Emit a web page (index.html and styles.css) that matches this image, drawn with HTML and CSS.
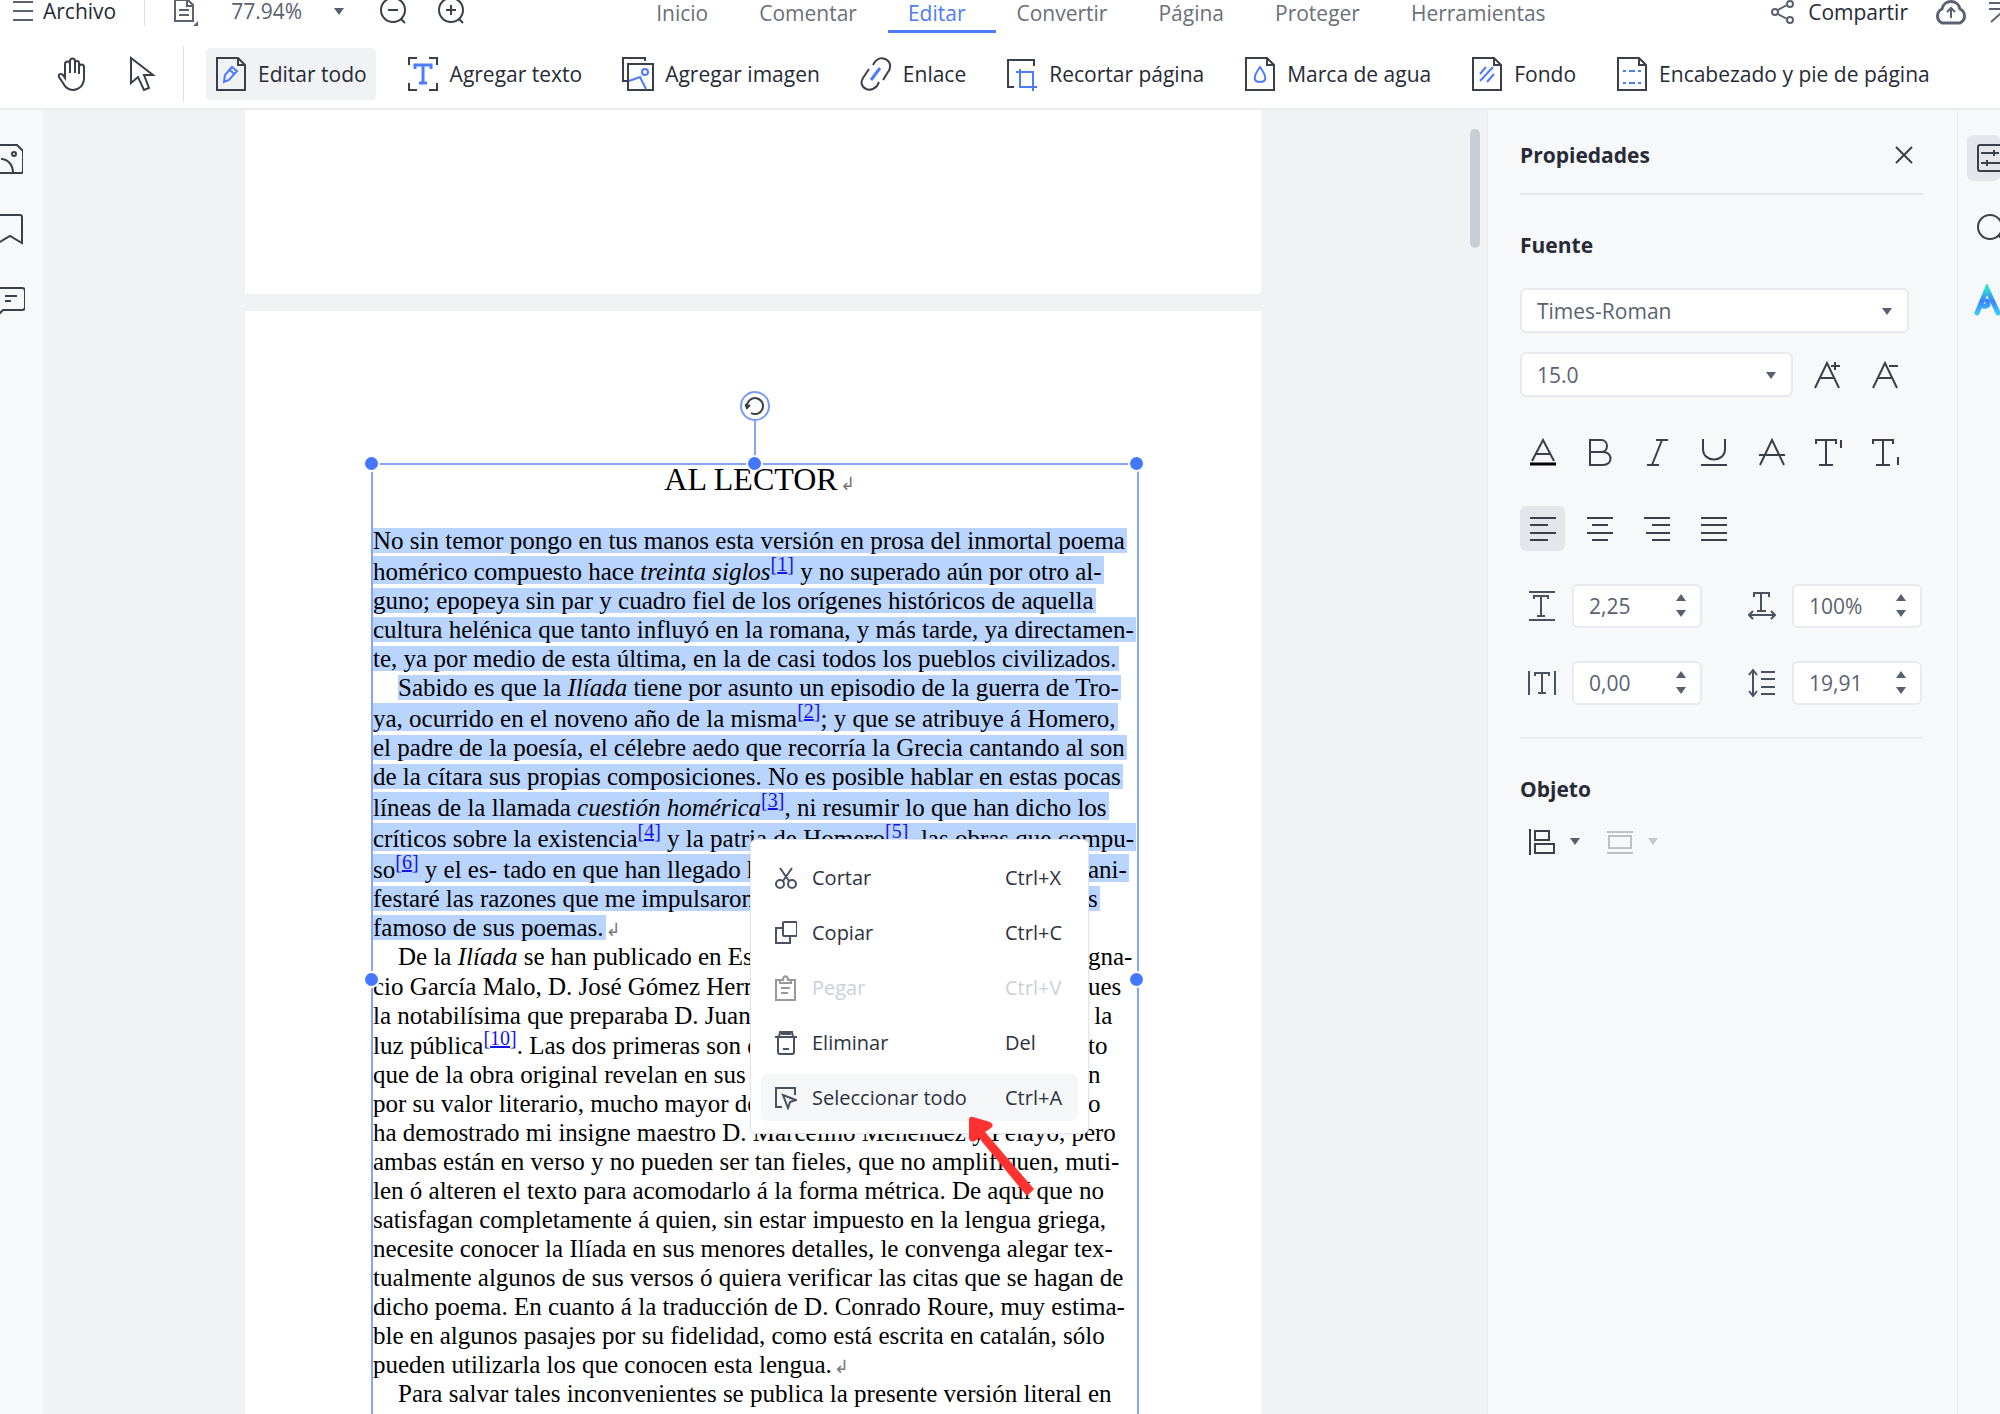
FILE: index.html
```html
<!DOCTYPE html>
<html lang="es">
<head>
<meta charset="utf-8">
<title>Editor PDF</title>
<link rel="stylesheet" href="styles.css">
</head>
<body>
<div id="app">
    <div id="topBar">
        <button class="archivo"><svg width="20" height="22" viewBox="0 0 20 22"><path d="M0 2h20M0 11h20M0 20h20"/></svg>Archivo</button>
        <span class="sep"></span>
        <button class="vista" aria-label="Vista de página"><svg width="26" height="30" viewBox="0 0 26 30"><path d="M2 4h13l5 5v16H2zM14 4v6h6M6 14h10M6 19h10"/><path class="fill" d="M25 25v5h-5z"/></svg></button>
        <button class="zoom">77.94%<i class="caret"></i></button>
        <button class="lupa" aria-label="Alejar"><svg width="28" height="28" viewBox="0 0 28 28"><circle cx="14" cy="13" r="12"/><path d="M9 13h10M22 22l4 4"/></svg></button>
        <button class="lupa" aria-label="Acercar"><svg width="28" height="28" viewBox="0 0 28 28"><circle cx="14" cy="13" r="12"/><path d="M9 13h10M14 8v10M22 22l4 4"/></svg></button>
        <div class="tabs">
            <a href="#">Inicio</a>
            <a href="#">Comentar</a>
            <a href="#" class="active">Editar</a>
            <a href="#">Convertir</a>
            <a href="#">Página</a>
            <a href="#">Proteger</a>
            <a href="#">Herramientas</a>
        </div>
        <div class="acciones">
            <button class="compartir"><svg width="24" height="26" viewBox="0 0 24 26"><circle cx="4" cy="13" r="3"/><circle cx="19" cy="5" r="3"/><circle cx="19" cy="21" r="3"/><path d="M7 11l9-5M7 15l9 5"/></svg>Compartir</button>
            <button aria-label="Nube"><svg width="30" height="28" viewBox="0 0 30 28"><path class="thick" d="M6 25C0 22 0 14 6 11C8 1 22 1 24 11c6 3 6 11 0 14z"/><path d="M15 20v-9M11 14l4-4 4 4"/></svg></button>
            <button class="plegar" aria-label="Contraer"><svg width="24" height="26" viewBox="0 0 24 26"><path d="M1 4h22M1 10h22M3 23l9-8 9 8"/></svg></button>
        </div>
    </div>
    <!--/topBar-->
    <div id="tools">
        <button class="solo" aria-label="Mano"><svg width="32" height="36" viewBox="0 0 32 36"><path d="M9 20V8a2 2 0 0 1 5 0v9V5a2 2 0 0 1 5 0v12V7a2 2 0 0 1 4 0v11-7a2 2 0 0 1 5 0v11c0 7-5 12-11 12-5 0-8-3-10-7L3 21c-1-3 2-4 4-2l2 3z"/></svg></button>
        <button class="solo flecha" aria-label="Seleccionar"><svg width="32" height="36" viewBox="0 0 32 36"><path d="M5 2v25l7-6 6 13 5-2-5-13h9z"/></svg></button>
        <span class="sep"></span>
        <button class="active"><svg width="32" height="36" viewBox="0 0 32 36"><path d="M2 2h21l7 7v25H2zM23 2v7h7"/><path class="b" d="M9 26l1-7 7-8 5 4-8 9zM15 14l4 4"/></svg>Editar todo</button>
        <button><svg width="32" height="36" viewBox="0 0 32 36"><path d="M2 9V2h8M22 2h8v7M30 27v7h-8M10 34H2v-7"/><path class="b thick" d="M8 13V9h16v4M16 9v18M12 27h8"/></svg>Agregar texto</button>
        <button><svg width="32" height="36" viewBox="0 0 32 36"><path d="M23 5V2H1v23h4"/><path d="M6 8h25v26H6z"/><path class="b" d="M7 25l11-4 6 12"/><circle class="b" cx="23" cy="16" r="3"/></svg>Agregar imagen</button>
        <button><svg width="32" height="36" viewBox="0 0 32 36"><path d="M13 9c4-8 10-8 14-5s4 8 1 12l-5 8M9 13l-6 9c-3 5-1 9 3 11 5 2 8 0 11-3l2-4"/><path class="b thick" d="M20 12l-9 12"/></svg>Enlace</button>
        <button><svg width="32" height="36" viewBox="0 0 32 36"><path d="M28 10V4H2v27h6"/><path class="b" d="M14 13v18h17M10 16h17v19"/></svg>Recortar página</button>
        <button><svg width="32" height="36" viewBox="0 0 32 36"><path d="M2 2h21l7 7v25H2zM23 2v7h7"/><path class="b" d="M16 11c-8 11-6 15 0 15s8-4 0-15z"/></svg>Marca de agua</button>
        <button><svg width="32" height="36" viewBox="0 0 32 36"><path d="M2 2h21l7 7v25H2zM23 2v7h7"/><path class="b" d="M9 18l6-7M9 25l13-14M16 26l7-8"/></svg>Fondo</button>
        <button><svg width="32" height="36" viewBox="0 0 32 36"><path d="M2 2h21l7 7v25H2zM23 2v7h7"/><path class="b" d="M7 15h3M13 15h6M22 15h3M7 27h3M13 27h6M22 27h3"/></svg>Encabezado y pie de página</button>
    </div>
    <!--/tools-->
    <div id="main">
        <div class="rail left">
            <button aria-label="Miniaturas"><svg width="32" height="32" viewBox="0 0 32 32"><path d="M1 2h25l6 6v20q0 2-2 2H1zM10 16c7 0 12 6 12 14"/><circle cx="23" cy="11" r="2"/></svg></button>
            <button aria-label="Marcadores"><svg width="32" height="32" viewBox="0 0 32 32"><path d="M6 2h23q2 0 2 2v26l-12-7-12 7z"/></svg></button>
            <button aria-label="Comentarios"><svg width="34" height="32" viewBox="0 0 34 32"><path d="M3 5h28q3 0 3 3v16q0 3-3 3H12l-4 4v-4H3zM14 13h12M14 18h6"/></svg></button>
        </div>
        <div id="canvas">
            <div class="pages">
                <div class="page first"></div>
                <div class="page">
                    <div class="textBox">
                        <span class="stem"></span>
                        <span class="rotate"><svg width="20" height="20" viewBox="0 0 20 20"><path d="M6 17A8 8 0 1 0 2 10M0 8l2 4 3-3"/></svg></span>
                        <i class="dot tl"></i><i class="dot tc"></i><i class="dot tr"></i><i class="dot ml"></i><i class="dot mr"></i>
                        <h1>AL LECTOR<span class="ret">↲</span></h1>
                        <p class="sel">
                            <span class="line"><mark>No sin temor pongo en tus manos esta versión en prosa del inmortal poema</mark></span>
                            <span class="line note"><mark>homérico compuesto hace <em>treinta siglos</em><sup>[<a href="#">1</a>]</sup> y no superado aún por otro al-</mark></span>
                            <span class="line"><mark>guno; epopeya sin par y cuadro fiel de los orígenes históricos de aquella</mark></span>
                            <span class="line"><mark>cultura helénica que tanto influyó en la romana, y más tarde, ya directamen-</mark></span>
                            <span class="line"><mark>te, ya por medio de esta última, en la de casi todos los pueblos civilizados.</mark></span>
                        </p>
                        <p class="sel">
                            <span class="line indent"><mark>Sabido es que la <em>Ilíada</em> tiene por asunto un episodio de la guerra de Tro-</mark></span>
                            <span class="line note"><mark>ya, ocurrido en el noveno año de la misma<sup>[<a href="#">2</a>]</sup>; y que se atribuye á Homero,</mark></span>
                            <span class="line"><mark>el padre de la poesía, el célebre aedo que recorría la Grecia cantando al son</mark></span>
                            <span class="line"><mark>de la cítara sus propias composiciones. No es posible hablar en estas pocas</mark></span>
                            <span class="line note"><mark>líneas de la llamada <em>cuestión homérica</em><sup>[<a href="#">3</a>]</sup>, ni resumir lo que han dicho los</mark></span>
                            <span class="line note"><mark>críticos sobre la existencia<sup>[<a href="#">4</a>]</sup> y la patria de Homero<sup>[<a href="#">5</a>]</sup>, las obras que compu-</mark></span>
                            <span class="line note"><mark><span class="lead">so<sup>[<a href="#">6</a>]</sup> y el es- tado en que han llegado h</span><span>ani-</span></mark></span>
                            <span class="line"><mark><span class="lead">festaré las razones que me impulsaron</span><span>s</span></mark></span>
                            <span class="line"><mark>famoso de sus poemas.</mark><span class="ret">↲</span></span>
                        </p>
                        <p>
                            <span class="line indent"><span class="lead">De la <em>Ilíada</em> se han publicado en Es</span><span>gna-</span></span>
                            <span class="line note"><span class="lead">cio García Malo, D. José Gómez Herm</span><span>ues</span></span>
                            <span class="line"><span class="lead">la notabilísima que preparaba D. Juan</span><span>&nbsp;la</span></span>
                            <span class="line note"><span class="lead">luz pública<sup>[<a href="#">10</a>]</sup>. Las dos primeras son d</span><span>to</span></span>
                            <span class="line"><span class="lead">que de la obra original revelan en sus a</span><span>n</span></span>
                            <span class="line"><span class="lead">por su valor literario, mucho mayor de</span><span>o</span></span>
                            <span class="line">ha demostrado mi insigne maestro D. Marcelino Menéndez y Pelayo, pero</span>
                            <span class="line">ambas están en verso y no pueden ser tan fieles, que no amplifiquen, muti-</span>
                            <span class="line">len ó alteren el texto para acomodarlo á la forma métrica. De aquí que no</span>
                            <span class="line">satisfagan completamente á quien, sin estar impuesto en la lengua griega,</span>
                            <span class="line">necesite conocer la Ilíada en sus menores detalles, le convenga alegar tex-</span>
                            <span class="line">tualmente algunos de sus versos ó quiera verificar las citas que se hagan de</span>
                            <span class="line">dicho poema. En cuanto á la traducción de D. Conrado Roure, muy estima-</span>
                            <span class="line">ble en algunos pasajes por su fidelidad, como está escrita en catalán, sólo</span>
                            <span class="line">pueden utilizarla los que conocen esta lengua.<span class="ret">↲</span></span>
                        </p>
                        <p>
                            <span class="line indent">Para salvar tales inconvenientes se publica la presente versión literal en</span>
                            <span class="line">prosa castellana, en cuya lengua apenas se variable, se ha de los textos son</span>
                        </p>
                        <div class="menu">
                            <button><svg width="22" height="24" viewBox="0 0 22 24"><circle cx="5" cy="18" r="4"/><circle cx="17" cy="18" r="4"/><path d="M5 2l9 13M17 2L8 15"/></svg><span>Cortar</span><span class="key">Ctrl+X</span></button>
                            <button><svg width="22" height="24" viewBox="0 0 22 24"><rect x="8" y="1" width="14" height="14" rx="1"/><path d="M8 7H1v15h14v-7"/></svg><span>Copiar</span><span class="key">Ctrl+C</span></button>
                            <button disabled><svg width="22" height="26" viewBox="0 0 22 26"><path d="M6 5H1v20h19V5h-5M5 8V5h3c0-5 5-5 5 0h3v3zM6 13h9M6 18h7"/></svg><span>Pegar</span><span class="key">Ctrl+V</span></button>
                            <button><svg width="22" height="24" viewBox="0 0 22 24"><path d="M0 6h22M4 6l1-5h12l1 5M3 6v15q0 2 2 2h12q2 0 2-2V6M8 18h6M6 3h10"/></svg><span>Eliminar</span><span class="key">Del</span></button>
                            <button class="active"><svg width="22" height="24" viewBox="0 0 22 24"><path d="M20 9V2H1v19h6M8 9l13 5-6 2-2 6z"/></svg><span>Seleccionar todo</span><span class="key">Ctrl+A</span></button>
                        </div>
                        <svg class="pointer" width="70" height="82" viewBox="0 0 70 82"><path d="M2 5q0-4 4-3l17 5q5 3 1 6l-6 4 49 57-7 7-48-58-4 3q-5 2-6-3z"/></svg>
                    </div>
                </div>
            </div>
            <div class="scroll"><i></i></div>
        </div>
        <!--/canvas-->
        <div id="props">
            <div class="head"><h2>Propiedades</h2><button aria-label="Cerrar"><svg width="18" height="18" viewBox="0 0 18 18"><path d="M1 1l16 16M17 1L1 17"/></svg></button></div>
            <h2>Fuente</h2>
            <div class="fields">
                <label class="drop"><select aria-label="Fuente"><option>Times-Roman</option></select></label>
                <div class="size">
                    <label class="drop"><select aria-label="Tamaño"><option>15.0</option></select></label>
                    <button aria-label="Aumentar"><svg width="28" height="28" viewBox="0 0 28 28"><path d="M2 27L14 2l12 25M6 17h16M18 5h9M22 1v8"/></svg></button>
                    <button aria-label="Reducir"><svg width="28" height="28" viewBox="0 0 28 28"><path d="M2 27L14 2l12 25M6 17h16M18 5h9"/></svg></button>
                </div>
            </div>
            <div class="icons">
                <button aria-label="Color"><svg width="28" height="28" viewBox="0 0 28 28"><path d="M3 23L14 2l11 21M7 16h14"/><path class="black" d="M1 26h26"/></svg></button>
                <button aria-label="Negrita"><svg width="28" height="28" viewBox="0 0 28 28"><path d="M4 2h11c8 0 8 12 0 12H4zM4 14h13c10 0 10 13 0 13H4z"/></svg></button>
                <button aria-label="Cursiva"><svg width="28" height="28" viewBox="0 0 28 28"><path d="M13 2h12M19 2L9 27M4 27h12"/></svg></button>
                <button aria-label="Subrayado"><svg width="28" height="28" viewBox="0 0 28 28"><path d="M3 1v10c0 14 22 14 22 0V1M1 27h26"/></svg></button>
                <button aria-label="Tachado"><svg width="28" height="28" viewBox="0 0 28 28"><path d="M2 27L14 2l12 25M1 17h26"/></svg></button>
                <button aria-label="Superíndice"><svg width="28" height="28" viewBox="0 0 28 28"><path d="M1 6V2h20v4M11 2v25M4 27h14M26 2v8"/></svg></button>
                <button aria-label="Subíndice"><svg width="28" height="28" viewBox="0 0 28 28"><path d="M1 6V2h20v4M11 2v25M4 27h14M26 19v8"/></svg></button>
            </div>
            <div class="icons">
                <button class="active" aria-label="Izquierda"><svg width="28" height="28" viewBox="0 0 28 28"><path d="M1 3h26M1 10h18M1 18h26M1 25h18"/></svg></button>
                <button aria-label="Centro"><svg width="28" height="28" viewBox="0 0 28 28"><path d="M1 3h26M6 10h16M1 18h26M6 25h16"/></svg></button>
                <button aria-label="Derecha"><svg width="28" height="28" viewBox="0 0 28 28"><path d="M1 3h26M9 10h18M3 18h24M9 25h18"/></svg></button>
                <button aria-label="Justificar"><svg width="28" height="28" viewBox="0 0 28 28"><path d="M1 3h26M1 10h26M1 18h26M1 25h26"/></svg></button>
            </div>
            <div class="spins">
                <svg width="28" height="32" viewBox="0 0 28 32"><path d="M1 2h26M1 30h26M6 9V6h14v3M13 6v20M9 26h8"/></svg>
                <div class="spin"><input type="text" value="2,25" aria-label="Altura"><button aria-label="Más"></button><button aria-label="Menos"></button></div>
                <svg width="28" height="32" viewBox="0 0 28 32"><path d="M6 7V3h15v4M13 3v18M9 21h9M2 25h24M5 21l-4 4 4 4M23 21l4 4-4 4"/></svg>
                <div class="spin"><input type="text" value="100%" aria-label="Escala"><button aria-label="Más"></button><button aria-label="Menos"></button></div>
                <svg width="28" height="32" viewBox="0 0 28 32"><path d="M1 4v24M27 4v24M7 9V6h14v3M14 6v20M10 26h8"/></svg>
                <div class="spin"><input type="text" value="0,00" aria-label="Espaciado"><button aria-label="Más"></button><button aria-label="Menos"></button></div>
                <svg width="28" height="32" viewBox="0 0 28 32"><path d="M5 4v24M1 8l4-5 4 5M1 24l4 5 4-5M13 5h14M13 12h14M13 20h14M13 27h14"/></svg>
                <div class="spin"><input type="text" value="19,91" aria-label="Interlineado"><button aria-label="Más"></button><button aria-label="Menos"></button></div>
            </div>
            <h2>Objeto</h2>
            <div class="objeto">
                <button aria-label="Alinear"><svg width="28" height="28" viewBox="0 0 28 28"><path d="M2 1v26M7 3h14v9H7zM7 16h19v9H7z"/></svg><i class="caret"></i></button>
                <button disabled aria-label="Distribuir"><svg width="28" height="28" viewBox="0 0 28 28"><path d="M1 4h26M1 25h26M3 8h22v12H3z"/></svg><i class="caret"></i></button>
            </div>
        </div>
        <!--/props-->
        <div class="rail right">
            <button class="active" aria-label="Propiedades"><svg width="32" height="32" viewBox="0 0 32 32"><rect x="2" y="3" width="28" height="26" rx="2"/><path d="M5 11h18M18 8v6M5 21h22M11 18v6"/></svg></button>
            <button aria-label="Buscar"><svg width="32" height="32" viewBox="0 0 32 32"><circle cx="14" cy="15" r="12"/><path d="M22 23l7 7"/></svg></button>
            <button class="ai" aria-label="IA"><svg width="32" height="32" viewBox="0 0 32 32"><defs><linearGradient id="g" x1="0" y1="1" x2="0" y2="0"><stop offset="0" stop-color="#38c8ff"/><stop offset=".5" stop-color="#3b82ff"/><stop offset="1" stop-color="#2ce0cf"/></linearGradient></defs><path d="M3 29L13 5l11 24M9 22c5 1 6-1 4-5" stroke="url(#g)"/></svg></button>
        </div>
    </div>
</div>
</body>
</html>
```
FILE: styles.css
```css
*{box-sizing:border-box;}
body,h1,h2,p{margin:0;padding:0;}
body{height:100vh;overflow:hidden;background:#FFF;color:#262B36;font:21px/30px "Open Sans","Noto Sans",sans-serif;}
button{display:flex;align-items:center;flex:none;margin:0;padding:0;border:0;background:none;color:inherit;font:inherit;white-space:nowrap;}
a{color:inherit;text-decoration:none;}
svg{display:block;flex:none;fill:none;stroke:#3A3F4A;stroke-width:2;}
svg .fill{fill:#5A6270;stroke:none;}
svg .b{stroke:#4D7CFE;}
svg .thick{stroke-width:3;}
svg .black{stroke:#000;stroke-width:3;}
.caret{flex:none;border:5px solid transparent;border-top:7px solid #56606F;border-bottom:0;}
.sep{flex:none;width:1px;background:#DDDFE3;}
#app{display:flex;flex-direction:column;height:100%;overflow:hidden;}

/* top bar */
#topBar{display:flex;align-items:center;flex:none;height:44px;margin-top:-11px;padding-left:13px;line-height:20px;}
#topBar svg{stroke:#5A6270;}
#topBar .archivo{gap:10px;}
#topBar .sep{height:30px;margin:0 28px;}
#topBar .zoom{gap:32px;margin:0 35px 0 32px;color:#5A6270;}
#topBar .lupa{margin-right:30px;}
#topBar .lupa svg{stroke:#3A3F4A;}
.tabs{display:flex;align-self:stretch;margin:0 auto 0 141px;color:#6B6F78;}
.tabs a{padding:14px 31px 0 20px;border-bottom:3px solid transparent;}
.tabs .active{color:#4D7CFE;border-color:#4D7CFE;}
.acciones{display:flex;align-items:center;flex:none;gap:28px;padding-top:2px;}
.compartir{gap:13px;}
#topBar .plegar{width:12px;overflow:hidden;margin-left:-6px;}

/* toolbar */
#tools{display:flex;align-items:center;flex:none;height:77px;padding:7px 0 0 47px;border-bottom:2px solid #EAECEE;gap:22px;}
#tools button{height:52px;gap:11px;padding:0 9px;border-radius:5px;}
#tools .flecha{margin:0 -4px 0 -2px;}
#tools .sep{height:56px;margin:0 0 0 -2px;}
#tools .active{background:#F0F2F4;}

/* layout */
#main{display:flex;flex:1;min-height:0;}
.rail{display:flex;flex-direction:column;flex:none;width:43px;padding-top:25px;background:#F7F8FA;overflow:hidden;}
.rail button{height:46px;margin-bottom:24px;}
.left{padding-top:26px;}
.left button{margin-left:-9px;}
.right{border-left:1px solid #ECEEF1;}
.right button{margin-left:9px;padding-left:9px;border-radius:6px;}
.right .active{background:#E4E6EC;}
.right .ai{padding:3px 0 0 7px;}
.ai svg{stroke-width:5;stroke-linecap:round;}
#canvas{display:flex;flex:1;min-width:0;background:#F0F2F4;}
.pages{display:flex;flex-direction:column;flex:1;min-width:0;gap:17px;padding:0 202px;}
.page{flex:1;min-height:0;padding:152px 122px 0 126px;background:#FFF;}
.page.first{flex:none;height:184px;padding:0;}
.scroll{flex:none;width:24px;padding:19px 0 0 7px;}
.scroll i{display:block;width:10px;height:119px;border-radius:5px;background:#C9CDD6;}

/* document text */
.textBox{position:relative;height:1034px;border:2px solid #86A5FA;color:#000;font:25px/25px "Liberation Serif",serif;white-space:nowrap;}
.textBox h1{margin-bottom:34px;padding-right:4px;font-size:32px;line-height:29px;font-weight:normal;text-align:center;}
.line{display:block;height:25px;margin-bottom:4px;}
.line mark{display:inline-block;height:25px;padding-right:2px;vertical-align:top;background:#B8D4FF;color:#000;}
.note{height:28px;margin:-2px 0 4px;padding-top:3px;}
.sel .note{margin-top:-1px;}
.note mark{height:28px;margin-top:-3px;padding-top:3px;}
.indent{padding-left:25px;}
/* lines that run under the menu */
.lead{display:inline-block;width:377px;margin-right:338px;overflow-x:clip;vertical-align:top;}
.indent .lead{width:352px;}
.line sup{color:#1414E6;font-size:20px;line-height:0;vertical-align:9px;}
.line sup a{text-decoration:underline;}
.ret{display:inline-block;width:18px;margin-right:-14px;padding-left:2px;color:#777;font:18px/14px "DejaVu Sans",sans-serif;}
mark+.ret{padding-left:0;}
.dot{position:absolute;width:17px;height:17px;margin:-9px;border:2px solid #FFF;border-radius:50%;background:#4477FF;}
.tl{left:-1px;top:-1px;}
.tc{left:50%;top:-1px;}
.tr{left:100%;top:-1px;}
.ml{left:-1px;top:50%;}
.mr{left:100%;top:50%;}
.stem{position:absolute;left:50%;top:-46px;width:2px;height:46px;margin-left:-1px;background:#86A5FA;}
.rotate{position:absolute;left:50%;top:-74px;width:30px;height:30px;margin-left:-15px;padding:3px;border:2px solid #7699FB;border-radius:50%;background:#FFF;}

/* context menu */
.menu{position:absolute;left:377px;top:374px;display:flex;flex-direction:column;gap:8px;width:339px;padding:14px 10px 12px;border:1px solid #E3E5EC;border-radius:6px;background:#FFF;color:#2C3240;font:20px/30px "Open Sans","Noto Sans",sans-serif;box-shadow:0 2px 4px rgba(40,50,80,.08);}
.menu button{height:47px;padding:0 13px 0 14px;gap:15px;border-radius:6px;}
.menu svg{stroke:#4A5160;}
.menu .key{width:60px;margin-left:auto;text-align:left;}
.menu .active{background:#F5F7F9;}
.menu button:disabled{color:#CDD0D8;}
.menu button:disabled svg{stroke:#999;}
.pointer{position:absolute;left:594px;top:650px;}
.pointer path{fill:#FF3131;stroke:none;}

/* properties panel */
#props{flex:none;width:470px;padding:0 34px 0 32px;border-left:1px solid #ECEEF1;background:#F7F8FA;color:#5A6270;}
#props h2{margin:35px 0 28px;color:#262B36;font-size:21px;line-height:30px;}
#props .head{display:flex;justify-content:space-between;align-items:center;height:85px;padding:6px 10px 0 0;border-bottom:2px solid #E4E6EC;}
#props .head h2{margin:0;}
.fields,.icons{margin:0 14px 32px 0;}
.fields{display:flex;flex-direction:column;gap:19px;}
.drop{position:relative;display:block;flex:1;}
.drop:after{content:"";position:absolute;right:17px;top:20px;border:5px solid transparent;border-top:7px solid #56606F;border-bottom:0;}
select{display:block;width:100%;height:45px;padding:0 15px;border:2px solid #E9EAEF;border-radius:6px;background:#FFF;color:inherit;font:inherit;appearance:none;}
.size{display:flex;align-items:center;gap:30px;}
.size .drop{margin-right:-10px;}
.size button:last-child{margin-right:10px;}
.icons{display:grid;grid-template-columns:repeat(7,45px);justify-content:space-between;}
.icons button{justify-content:center;height:45px;border-radius:6px;}
.icons .active{background:#E4E6EC;}
.spins{display:grid;grid-template-columns:28px 130px 58px 130px;align-items:center;gap:33px 16px;padding:1px 0 32px 8px;border-bottom:2px solid #EAECEF;}
.spins>svg:nth-of-type(even){justify-self:end;}
.spins svg{stroke:#4A5160;}
.spin{display:grid;grid-template-columns:1fr 18px;align-content:center;row-gap:8px;height:44px;padding-right:6px;border:2px solid #E9EAEF;border-radius:6px;background:#FFF;}
.spin input{grid-row:1/3;width:100%;padding:0 0 0 15px;border:0;background:none;color:inherit;font:inherit;line-height:24px;outline:none;}
.spin button{width:0;height:0;border:5px solid transparent;border-bottom:7px solid #56606F;border-top:0;}
.spin button:last-child{border-bottom:0;border-top:7px solid #56606F;}
#props .spins+h2{margin-bottom:15px;}
.objeto{display:flex;gap:26px;padding-left:8px;}
.objeto button{height:45px;gap:14px;}
.objeto button:disabled{opacity:.3;}
```
